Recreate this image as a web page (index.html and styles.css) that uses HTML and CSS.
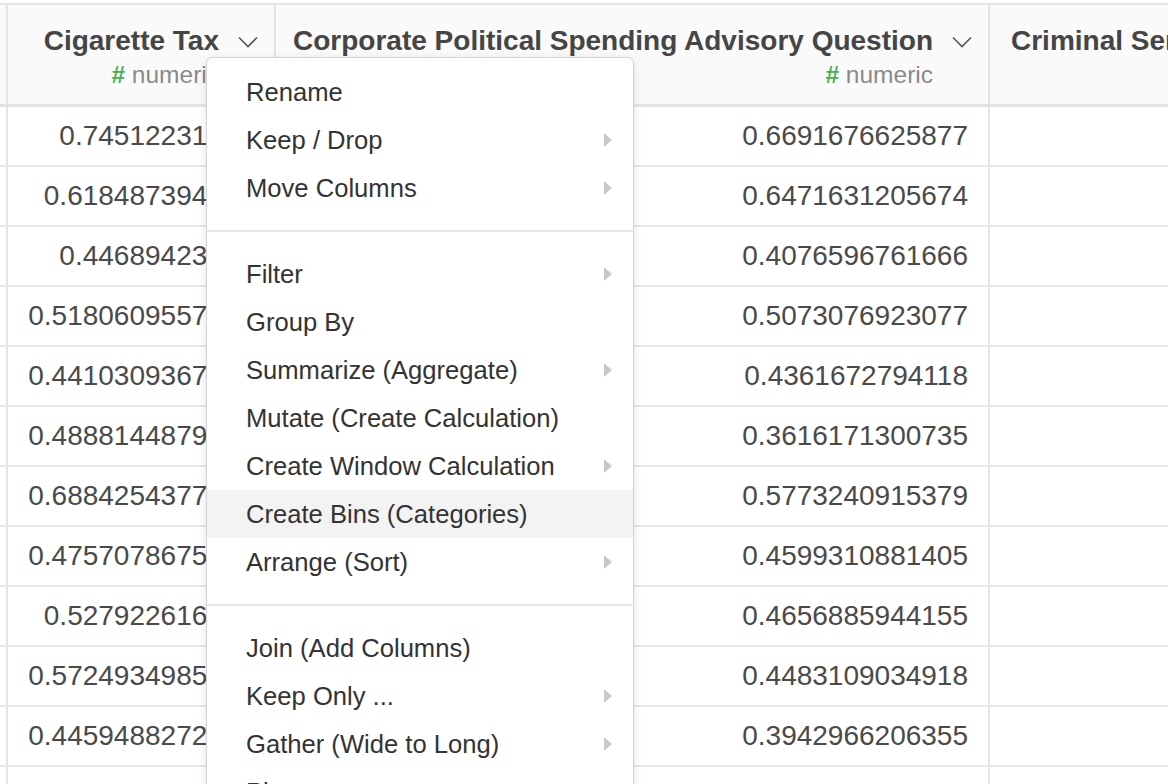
FILE: index.html
```html
<!DOCTYPE html>
<html lang="en">
<head>
    <meta charset="UTF-8">
    <title>Data Grid</title>
    <link rel="stylesheet" href="styles.css">
</head>
<body>
    <div class="grid">
        <div class="hrow">
            <div class="edge"></div>
            <div class="hcell c1">
                <div class="title">Cigarette Tax
                    <svg class="chev" width="20" height="12" viewBox="0 0 20 12"><path d="M1 1.5 L10 10.5 L19 1.5" fill="none" stroke="#555" stroke-width="1.6"/></svg>
                </div>
                <div class="type"><span class="hash">#</span> numeric</div>
            </div>
            <div class="hcell c2">
                <div class="title">Corporate Political Spending Advisory Question
                    <svg class="chev" width="20" height="12" viewBox="0 0 20 12"><path d="M1 1.5 L10 10.5 L19 1.5" fill="none" stroke="#555" stroke-width="1.6"/></svg>
                </div>
                <div class="type"><span class="hash">#</span> numeric</div>
            </div>
            <div class="hcell c3">
                <div class="title left">Criminal Sentencing Reform</div>
            </div>
        </div>

        <div class="row"><div class="edge"></div><div class="cell c1">0.74512231092</div><div class="cell c2">0.6691676625877</div><div class="cell c3"></div></div>
        <div class="row"><div class="edge"></div><div class="cell c1">0.618487394958</div><div class="cell c2">0.6471631205674</div><div class="cell c3"></div></div>
        <div class="row"><div class="edge"></div><div class="cell c1">0.44689423077</div><div class="cell c2">0.4076596761666</div><div class="cell c3"></div></div>
        <div class="row"><div class="edge"></div><div class="cell c1">0.5180609557522</div><div class="cell c2">0.5073076923077</div><div class="cell c3"></div></div>
        <div class="row"><div class="edge"></div><div class="cell c1">0.4410309367681</div><div class="cell c2">0.4361672794118</div><div class="cell c3"></div></div>
        <div class="row"><div class="edge"></div><div class="cell c1">0.4888144879518</div><div class="cell c2">0.3616171300735</div><div class="cell c3"></div></div>
        <div class="row"><div class="edge"></div><div class="cell c1">0.6884254377104</div><div class="cell c2">0.5773240915379</div><div class="cell c3"></div></div>
        <div class="row"><div class="edge"></div><div class="cell c1">0.4757078675193</div><div class="cell c2">0.4599310881405</div><div class="cell c3"></div></div>
        <div class="row"><div class="edge"></div><div class="cell c1">0.527922616137</div><div class="cell c2">0.4656885944155</div><div class="cell c3"></div></div>
        <div class="row"><div class="edge"></div><div class="cell c1">0.5724934985590</div><div class="cell c2">0.4483109034918</div><div class="cell c3"></div></div>
        <div class="row"><div class="edge"></div><div class="cell c1">0.4459488272921</div><div class="cell c2">0.3942966206355</div><div class="cell c3"></div></div>
        <div class="row"><div class="edge"></div><div class="cell c1">0.5013846153846</div><div class="cell c2">0.4120879120879</div><div class="cell c3"></div></div>
    </div>

    <!-- column context menu -->
    <div class="menu">
        <div class="item">Rename</div>
        <div class="item sub">Keep / Drop</div>
        <div class="item sub">Move Columns</div>
        <div class="divider"></div>
        <div class="item sub">Filter</div>
        <div class="item">Group By</div>
        <div class="item sub">Summarize (Aggregate)</div>
        <div class="item">Mutate (Create Calculation)</div>
        <div class="item sub">Create Window Calculation</div>
        <div class="item active">Create Bins (Categories)</div>
        <div class="item sub">Arrange (Sort)</div>
        <div class="divider"></div>
        <div class="item">Join (Add Columns)</div>
        <div class="item sub">Keep Only ...</div>
        <div class="item sub">Gather (Wide to Long)</div>
        <div class="item">Pivot</div>
    </div>
</body>
</html>
```

FILE: styles.css
```css
html, body{
    margin: 0;
    height: 100%;
    overflow: hidden;
}

body{
    background: #fff;
    font-family: "Liberation Sans", Arial, sans-serif;
    color: #444;
    position: relative;
    padding-top: 3px;
    box-sizing: border-box;
}

.grid{
    width: 1400px;
}

.hrow{
    display: flex;
    height: 99px;
    background: #fafafa;
    border-top: 2px solid #e4e4e4;
    border-bottom: 3px solid #e4e4e4;
}

.row{
    display: flex;
    height: 58px;
    border-bottom: 2px solid #e8e8e8;
}

.edge{
    width: 6px;
    flex: none;
    border-right: 2px solid #e4e4e4;
}

.c1{
    width: 268px;
    flex: none;
    box-sizing: border-box;
    border-right: 2px solid #e4e4e4;
}

.c2{
    width: 714px;
    flex: none;
    box-sizing: border-box;
    border-right: 2px solid #e4e4e4;
}

.c3{
    flex: 1;
}

.hcell{
    padding-right: 16px;
    box-sizing: border-box;
    overflow: hidden;
}

.title{
    display: flex;
    justify-content: flex-end;
    align-items: center;
    gap: 19px;
    height: 30px;
    margin-top: 21px;
    font-size: 28px;
    font-weight: bold;
    color: #454545;
    white-space: nowrap;
}

.title.left{
    justify-content: flex-start;
    padding-left: 21px;
}

.chev{
    flex: none;
    margin-top: 2px;
}

.type{
    text-align: right;
    padding-right: 39px;
    margin-top: 5px;
    font-size: 24.5px;
    color: #8a8a8a;
    white-space: nowrap;
}

.hash{
    color: #4caf50;
    font-weight: bold;
}

.cell{
    display: flex;
    align-items: center;
    justify-content: flex-end;
    padding-right: 20px;
    font-size: 28px;
    color: #4a4a4a;
    white-space: nowrap;
    overflow: hidden;
}

.menu{
    position: absolute;
    left: 206px;
    top: 57px;
    width: 428px;
    height: 760px;
    box-sizing: border-box;
    padding-top: 10px;
    background: #fff;
    border: 1px solid #d4d4d4;
    border-radius: 6px;
    box-shadow: 0 2px 8px rgba(0,0,0,0.12);
    font-size: 25.6px;
    color: #333;
}

.item{
    height: 48px;
    line-height: 48px;
    padding-left: 39px;
    position: relative;
    white-space: nowrap;
}

.item.active{
    background: #f3f3f3;
}

.item.sub::after{
    content: "";
    position: absolute;
    right: 21px;
    top: 17px;
    border-left: 8px solid #c9c9c9;
    border-top: 7px solid transparent;
    border-bottom: 7px solid transparent;
}

.divider{
    height: 2px;
    background: #e6e6e6;
    margin: 18px 0;
}
```
